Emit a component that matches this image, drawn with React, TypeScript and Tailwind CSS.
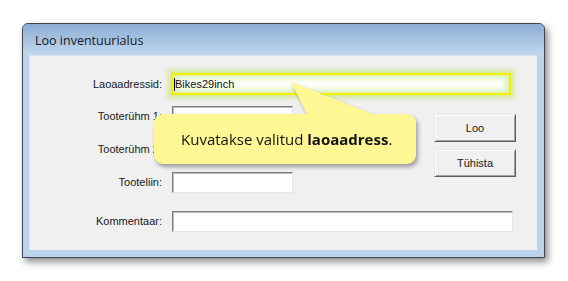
import React from 'react';

const labelFont = { fontFamily: '"Liberation Sans", Arial, sans-serif' };

const Field: React.FC<{ label: string; width: string; highlight?: boolean; value?: string }> = ({
  label,
  width,
  highlight,
  value,
}) => (
  <div className="flex items-center">
    <div className="w-[133px] pr-[1px] text-right text-[11px] text-[#1a1a1a]" style={labelFont}>
      {label}
    </div>
    {highlight ? (
      <div
        className={`ml-[8px] ${width} h-[22px] flex items-center border-2 border-[#f2f200] bg-white pl-[1px] shadow-[0_0_5px_3px_rgba(200,230,110,0.7),inset_0_0_6px_3px_rgba(212,238,165,0.95)]`}
      >
        <span className="w-px h-[13px] bg-black" />
        <span className="text-[11px] text-[#111]" style={labelFont}>
          {value}
        </span>
      </div>
    ) : (
      <div
        className={`ml-[9px] ${width} h-[21px] bg-white border border-t-[#7c7c7c] border-l-[#7c7c7c] border-r-[#e6e6e6] border-b-[#e6e6e6] shadow-[inset_1px_1px_0_#bdbdbd]`}
      />
    )}
  </div>
);

const Button: React.FC<{ label: string }> = ({ label }) => (
  <div
    className="w-[82px] h-[28px] flex items-center justify-center bg-[#f0f0f0] border border-t-[#e8e8e8] border-l-[#e8e8e8] border-r-[#5e5e5e] border-b-[#5e5e5e] shadow-[inset_1px_1px_0_#ffffff,inset_-1px_-1px_0_#a0a0a0] text-[11px] text-[#1a1a1a]"
    style={labelFont}
  >
    {label}
  </div>
);

export default function App() {
  return (
    <div className="w-[568px] h-[281px] bg-white pt-[23px] pl-[22px] overflow-hidden">
      <div className="w-[523px] h-[235px] flex flex-col rounded-t-[6px] border border-[#3d4550] bg-[#bcd3ec] shadow-[3px_4px_7px_rgba(0,0,0,0.45)]">
        {/* Title bar */}
        <div className="h-[31px] flex items-center pl-[12px] pt-[3px] rounded-t-[5px] bg-gradient-to-b from-[#8badd3] to-[#c3d8ee]">
          <span className="text-[12.5px] text-[#111a26]" style={{ fontFamily: '"Open Sans", "Noto Sans", sans-serif' }}>
            Loo inventuurialus
          </span>
        </div>

        {/* Client area */}
        <div className="relative ml-[6px] mr-[7px] mb-[7px] h-[195px] bg-[#f0f0f0] border-t border-l border-[#d7e3f0] pt-[17px]">
          <Field label="Laoaadressid:" width="w-[340px]" highlight value="Bikes29inch" />

          <div className="flex mt-[11px]">
            <div className="flex flex-col gap-[12px]">
              <Field label="Tooterühm 1:" width="w-[121px]" />
              <Field label="Tooterühm 2:" width="w-[121px]" />
              <Field label="Tooteliin:" width="w-[121px]" />
            </div>
            <div className="ml-[141px] mt-[8px] flex flex-col gap-[7px]">
              <Button label="Loo" />
              <Button label="Tühista" />
            </div>
          </div>

          <div className="mt-[18px]">
            <Field label="Kommentaar:" width="w-[341px]" />
          </div>

          {/* Callout */}
          <div className="absolute left-[124px] top-[58px] drop-shadow-[2px_3px_2px_rgba(0,0,0,0.35)]">
            <svg
              className="absolute left-[137px] top-[-32px]"
              width="92"
              height="36"
              viewBox="0 0 92 36"
            >
              <polygon points="0,0 18,36 92,36" fill="#fdf894" />
            </svg>
            <div className="relative w-[262px] h-[50px] rounded-[9px] bg-[#fdf894] flex items-center pl-[27px]">
              <span
                className="text-[15px] text-[#141414]"
                style={{ fontFamily: '"Open Sans", "Noto Sans", sans-serif' }}
              >
                Kuvatakse valitud <b className="font-bold">laoaadress</b>.
              </span>
            </div>
          </div>
        </div>
      </div>
    </div>
  );
}
